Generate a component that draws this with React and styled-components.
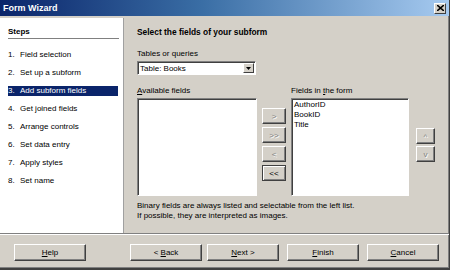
import React from 'react';
import styled, { createGlobalStyle } from 'styled-components';

const GlobalStyle = createGlobalStyle`
  html, body {
    margin: 0;
    padding: 0;
    background: #d4d0c8;
  }
  body {
    font-family: 'Liberation Sans', Arial, sans-serif;
    font-size: 8px;
    color: #000;
  }
`;

const Window = styled.div`
  width: 450px;
  height: 270px;
  box-sizing: border-box;
  display: flex;
  flex-direction: column;
  background: #d4d0c8;
  border-right: 1px solid #404040;
  border-bottom: 2px solid #404040;
  box-shadow: inset -1px -1px 0 #808080;
  overflow: hidden;
`;

const TitleBar = styled.div`
  height: 16px;
  flex-shrink: 0;
  display: flex;
  align-items: center;
  justify-content: space-between;
  padding: 0 3px;
  background: linear-gradient(90deg, #0a246a 0%, #3a6ea5 45%, #a6caf0 100%);
`;

const Title = styled.span`
  color: #fff;
  font-weight: bold;
  font-size: 9px;
`;

const CloseButton = styled.div`
  width: 12px;
  height: 11px;
  box-sizing: border-box;
  background: #d4d0c8;
  border: 1px solid;
  border-color: #fff #404040 #404040 #fff;
  display: flex;
  align-items: center;
  justify-content: center;
`;

const Main = styled.div`
  flex: 1;
  display: flex;
  margin-top: 2px;
  border-bottom: 1px solid #808080;
  box-shadow: 0 1px 0 #fff;
`;

const StepsPane = styled.div`
  width: 124px;
  flex-shrink: 0;
  background: #fff;
  border-right: 1px solid #a0a0a0;
  padding: 9px 4px 0 8px;
  box-sizing: border-box;
`;

const StepsTitle = styled.div`
  font-weight: bold;
  line-height: 10px;
  padding-bottom: 1px;
  border-bottom: 1px solid #808080;
  margin-bottom: 11px;
`;

const StepItem = styled.div`
  display: flex;
  width: 110px;
  height: 10px;
  line-height: 10px;
  margin-bottom: 8px;
  background: ${({ active }) => (active ? '#0a246a' : 'transparent')};
  color: ${({ active }) => (active ? '#fff' : '#000')};
`;

const StepNum = styled.span`
  width: 12px;
  flex-shrink: 0;
`;

const Content = styled.div`
  flex: 1;
  padding: 9px 0 0 13px;
  display: flex;
  flex-direction: column;
`;

const Heading = styled.div`
  font-weight: bold;
  font-size: 8.4px;
  line-height: 10px;
  margin-bottom: 12px;
`;

const Label = styled.div`
  line-height: 10px;
  margin-bottom: ${({ gap }) => gap || 0}px;
`;

const SelectBox = styled.div`
  width: 119px;
  height: 14px;
  box-sizing: border-box;
  background: #fff;
  border: 1px solid;
  border-color: #808080 #fff #fff #808080;
  box-shadow: inset 1px 1px 0 #404040;
  display: flex;
  align-items: center;
  justify-content: space-between;
  padding-left: 2px;
  margin-bottom: 11px;
`;

const DropButton = styled.div`
  width: 11px;
  height: 10px;
  margin-right: 1px;
  box-sizing: border-box;
  background: #d4d0c8;
  border: 1px solid;
  border-color: #fff #404040 #404040 #fff;
  display: flex;
  align-items: center;
  justify-content: center;
`;

const FieldsGrid = styled.div`
  display: grid;
  grid-template-columns: 120px 24px 118px 21px;
  grid-template-rows: 12px 98px;
  column-gap: 5px;
  align-items: start;
`;

const ListBox = styled.div`
  height: 98px;
  box-sizing: border-box;
  background: #fff;
  border: 1px solid;
  border-color: #808080 #fff #fff #808080;
  box-shadow: inset 1px 1px 0 #404040;
  padding: 1px 2px;
  line-height: 10px;
`;

const ButtonColumn = styled.div`
  display: flex;
  flex-direction: column;
  gap: ${({ gap }) => gap}px;
  padding-top: ${({ top }) => top}px;
  margin-left: ${({ shift }) => shift || 0}px;
`;

const SmallButton = styled.div`
  height: 16px;
  box-sizing: border-box;
  display: flex;
  align-items: center;
  justify-content: center;
  background: #d4d0c8;
  border: 1px solid;
  border-color: ${({ focused }) =>
    focused ? '#404040' : '#fff #404040 #404040 #fff'};
  box-shadow: ${({ focused }) =>
    focused ? 'inset 1px 1px 0 #fff, inset -1px -1px 0 #808080' : 'inset -1px -1px 0 #808080'};
  color: ${({ disabled }) => (disabled ? '#808080' : '#000')};
  text-shadow: ${({ disabled }) => (disabled ? '1px 1px 0 #fff' : 'none')};
  font-size: 8px;
`;

const Note = styled.div`
  margin-top: 5px;
  line-height: 10px;
`;

const ButtonBar = styled.div`
  height: 32px;
  display: flex;
  align-items: center;
  padding: 2px 0 0 14px;
`;

const PushButton = styled.div`
  width: 72px;
  height: 17px;
  box-sizing: border-box;
  display: flex;
  align-items: center;
  justify-content: center;
  background: #d4d0c8;
  border: 1px solid;
  border-color: #fff #404040 #404040 #fff;
  box-shadow: inset -1px -1px 0 #808080;
  margin-left: ${({ space }) => space || 0}px;
`;

const steps = [
  'Field selection',
  'Set up a subform',
  'Add subform fields',
  'Get joined fields',
  'Arrange controls',
  'Set data entry',
  'Apply styles',
  'Set name',
];

export default function App() {
  return (
    <>
      <GlobalStyle />
      <Window>
        <TitleBar>
          <Title>Form Wizard</Title>
          <CloseButton>
            <svg width="7" height="6" viewBox="0 0 7 6">
              <path d="M0 0 L7 6 M7 0 L0 6" stroke="#000" strokeWidth="1.6" />
            </svg>
          </CloseButton>
        </TitleBar>
        <Main>
          <StepsPane>
            <StepsTitle>Steps</StepsTitle>
            {steps.map((s, i) => (
              <StepItem key={s} active={i === 2}>
                <StepNum>{i + 1}.</StepNum>
                <span>{s}</span>
              </StepItem>
            ))}
          </StepsPane>
          <Content>
            <Heading>Select the fields of your subform</Heading>
            <Label gap={2}>Tables or queries</Label>
            <SelectBox>
              <span>Table: Books</span>
              <DropButton>
                <svg width="5" height="3" viewBox="0 0 5 3">
                  <path d="M0 0 H5 L2.5 3 Z" fill="#000" />
                </svg>
              </DropButton>
            </SelectBox>
            <FieldsGrid>
              <Label>
                <u>A</u>vailable fields
              </Label>
              <span />
              <Label>
                Fields in <u>t</u>he form
              </Label>
              <span />
              <ListBox />
              <ButtonColumn gap={3} top={10}>
                <SmallButton disabled>&gt;</SmallButton>
                <SmallButton disabled>&gt;&gt;</SmallButton>
                <SmallButton disabled>&lt;</SmallButton>
                <SmallButton focused>&lt;&lt;</SmallButton>
              </ButtonColumn>
              <ListBox>
                <div>AuthorID</div>
                <div>BookID</div>
                <div>Title</div>
              </ListBox>
              <ButtonColumn gap={2} top={30} shift={2}>
                <SmallButton disabled>^</SmallButton>
                <SmallButton disabled>v</SmallButton>
              </ButtonColumn>
            </FieldsGrid>
            <Note>
              Binary fields are always listed and selectable from the left list.
              <br />
              If possible, they are interpreted as images.
            </Note>
          </Content>
        </Main>
        <ButtonBar>
          <PushButton>
            <span>
              <u>H</u>elp
            </span>
          </PushButton>
          <PushButton space={44}>
            <span>
              &lt; <u>B</u>ack
            </span>
          </PushButton>
          <PushButton space={5}>
            <span>
              <u>N</u>ext &gt;
            </span>
          </PushButton>
          <PushButton space={8}>
            <span>
              <u>F</u>inish
            </span>
          </PushButton>
          <PushButton space={8}>
            <span>
              <u>C</u>ancel
            </span>
          </PushButton>
        </ButtonBar>
      </Window>
    </>
  );
}
